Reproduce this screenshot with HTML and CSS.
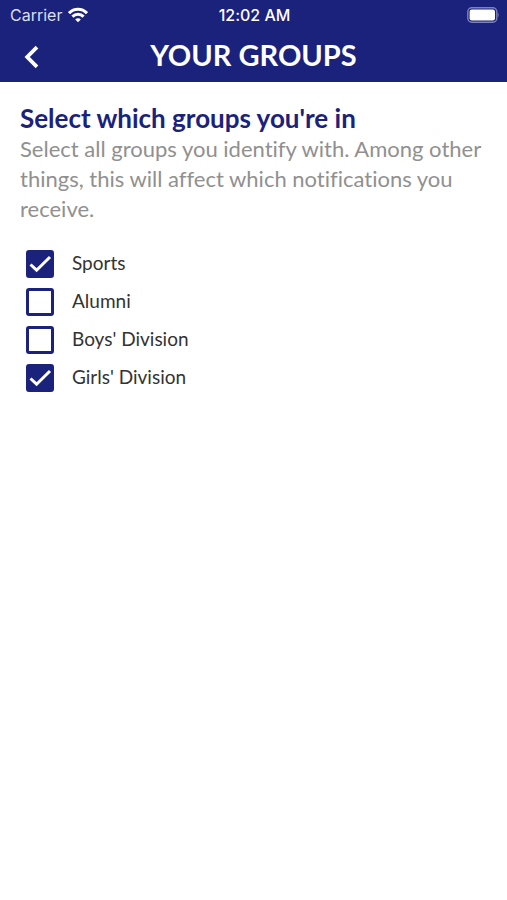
FILE: index.html
```html
<!DOCTYPE html>
<html lang="en">
<head>
    <meta charset="UTF-8">
    <meta name="viewport" content="width=device-width, initial-scale=1.0">
    <title>Your Groups</title>
    <link rel="stylesheet" href="styles.css">
</head>
<body>
    <header>
        <div class="status-bar">
            <div class="carrier">
                <span>Carrier</span>
                <svg width="20" height="16" viewBox="0 0 20 16" fill="none" stroke="white" stroke-width="3">
                    <path d="M1 6.2C6 1 14 1 19 6.2"/>
                    <path d="M4.4 9.6C7.6 6.4 12.4 6.4 15.6 9.6"/>
                    <path d="M10 15.2L7.2 12.4C8.8 10.9 11.2 10.9 12.8 12.4Z" fill="white" stroke="none"/>
                </svg>
            </div>
            <span class="time">12:02 AM</span>
            <svg class="battery" width="32" height="16" viewBox="0 0 32 16">
                <rect x="0.8" y="0.8" width="29" height="14.4" rx="4" fill="none" stroke="#7d82bd" stroke-width="1.4"/>
                <rect x="2.6" y="2.6" width="25.4" height="10.8" rx="2.2" fill="white"/>
                <path d="M30.8 5.6Q32.6 8 30.8 10.4Z" fill="#7d82bd"/>
            </svg>
        </div>
        <div class="nav-bar">
            <button class="back-button" type="button" aria-label="Back">
                <svg width="16" height="24" viewBox="0 0 16 24" fill="none" stroke="white" stroke-width="3.8">
                    <path d="M13 2.2L3.2 12L13 21.8"/>
                </svg>
            </button>
            <h1>YOUR GROUPS</h1>
        </div>
    </header>

    <main>
        <h2>Select which groups you're in</h2>
        <p>Select all groups you identify with. Among other things, this will affect which notifications you receive.</p>

        <form class="groups">
            <label>
                <span class="checkbox">
                    <input type="checkbox" name="sports" checked>
                    <svg viewBox="0 0 28 28"><path d="M4.5 14.5L10.6 20.2L24 7"/></svg>
                </span>
                Sports
            </label>
            <label>
                <span class="checkbox">
                    <input type="checkbox" name="alumni">
                    <svg viewBox="0 0 28 28"><path d="M4.5 14.5L10.6 20.2L24 7"/></svg>
                </span>
                Alumni
            </label>
            <label>
                <span class="checkbox">
                    <input type="checkbox" name="boys">
                    <svg viewBox="0 0 28 28"><path d="M4.5 14.5L10.6 20.2L24 7"/></svg>
                </span>
                Boys' Division
            </label>
            <label>
                <span class="checkbox">
                    <input type="checkbox" name="girls" checked>
                    <svg viewBox="0 0 28 28"><path d="M4.5 14.5L10.6 20.2L24 7"/></svg>
                </span>
                Girls' Division
            </label>
        </form>
    </main>
</body>
</html>
```
FILE: styles.css
```css
body {
    font-family: Lato, 'Liberation Sans', sans-serif;
    font-variant-ligatures: none;
    margin: 0;
    background: white;
    color: #333;
}

header {
    background-color: #1b227c;
    color: white;
}

.status-bar {
    display: grid;
    grid-template-columns: 1fr auto 1fr;
    align-items: center;
    height: 30px;
    padding: 0 8px 0 10px;
    font-family: Inter, 'Liberation Sans', sans-serif;
    font-size: 16px;
}

.carrier {
    display: flex;
    align-items: center;
    gap: 6px;
    color: #dcdef2;
}

.time {
    font-weight: 500;
}

.battery {
    justify-self: end;
}

/* Equal side columns keep the title centered */
.nav-bar {
    display: grid;
    grid-template-columns: 48px 1fr 48px;
    align-items: start;
    height: 52px;
}

.back-button {
    display: flex;
    background: none;
    border: none;
    padding: 15px 0 0 24px;
    cursor: pointer;
}

h1 {
    margin: 0;
    font-size: 29px;
    font-weight: 700;
    line-height: 50px;
    text-align: center;
}

main {
    padding: 20px 12px 24px 20px;
}

h2 {
    margin: 0;
    color: #1b227c;
    font-size: 26px;
    font-weight: 700;
    line-height: 32px;
}

p {
    margin: 0;
    color: #909090;
    font-size: 22px;
    line-height: 30px;
}

.groups {
    display: flex;
    flex-direction: column;
    gap: 10px;
    margin-top: 26px;
    padding-left: 6px;
}

label {
    display: flex;
    align-items: flex-start;
    gap: 18px;
    font-size: 19px;
    line-height: 26px;
}

/* The tick is stacked on the box in the same grid cell */
.checkbox {
    display: grid;
    width: 28px;
    height: 28px;
}

.checkbox input,
.checkbox svg {
    grid-area: 1 / 1;
}

.checkbox input {
    appearance: none;
    margin: 0;
    border: 3px solid #1b227c;
    border-radius: 3px;
    background: white;
}

.checkbox input:checked {
    background: #1b227c;
}

.checkbox svg {
    z-index: 1;
    fill: none;
    stroke: white;
    stroke-width: 3;
    pointer-events: none;
    visibility: hidden;
}

.checkbox input:checked + svg {
    visibility: visible;
}
```
